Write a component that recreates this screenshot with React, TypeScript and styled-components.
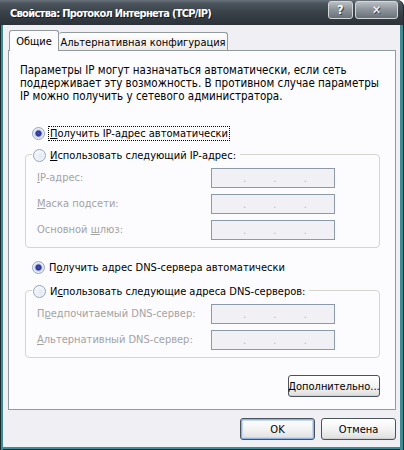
import styled, { createGlobalStyle } from "styled-components"

const Global = createGlobalStyle`
html, body { margin: 0; padding: 0; background: #fff; }
body {
  font-family: "DejaVu Sans Condensed", "DejaVu Sans", "Liberation Sans", sans-serif;
  font-size: 11px;
  color: #000;
}
`

const Window = styled.div`
width: 404px;
height: 450px;
display: flex;
flex-direction: column;
overflow: hidden;
`

const TitleBar = styled.div`
height: 25px;
flex: none;
display: flex;
justify-content: space-between;
align-items: flex-start;
padding: 0 6px 0 10px;
border-radius: 0 7px 0 0;
background: linear-gradient(to bottom, #6a727c 0%, #4b535c 14%, #3a4149 50%, #2c3238 100%);
box-shadow: inset -1px 0 #1b2a2e;
`

const Title = styled.div`
color: #fff;
font-weight: bold;
font-size: 11px;
letter-spacing: -0.7px;
line-height: 14px;
padding-top: 7px;
text-shadow: 1px 1px #161b20;
white-space: nowrap;
`

const Caption = styled.div`
display: flex;
gap: 2px;
padding-top: 1px;
`

const CapButton = styled.div<{ $w: number }>`
width: ${p => p.$w}px;
height: 18px;
box-sizing: border-box;
border: 1px solid #d3d7db;
border-radius: 3px;
background: linear-gradient(to bottom, #b9bec3 0%, #8e959c 45%, #6a7179 100%);
color: #fff;
font-weight: bold;
font-size: 12px;
display: flex;
align-items: center;
justify-content: center;
text-shadow: 1px 1px #3c4249;
`

const Body = styled.div`
flex: 1;
display: flex;
flex-direction: column;
padding: 5px 8px 0 8px;
background: #f0f0f4;
box-shadow: inset 1px 0 #1b2a2e, inset 3px 0 #3d8c94,
  inset -1px 0 #1b2a2e, inset -4px 0 #3d8c94,
  inset 0 -1px #1b2a2e, inset 0 -3px #3d8c94;
`

const TabStrip = styled.div`
display: flex;
align-items: flex-end;
height: 20px;
padding-left: 1px;
position: relative;
z-index: 1;
`

const Tab = styled.div<{ $active?: boolean; $w: number }>`
width: ${p => p.$w}px;
height: ${p => (p.$active ? 21 : 18)}px;
box-sizing: border-box;
border: 1px solid #919b9c;
border-bottom: none;
${p => (p.$active ? "" : "border-left: none;")}
border-radius: 3px 3px 0 0;
background: ${p => (p.$active ? "#fcfcfe" : "linear-gradient(to bottom, #ffffff, #ecebe8)")};
display: flex;
align-items: center;
justify-content: center;
padding-top: ${p => (p.$active ? 1 : 2)}px;
white-space: nowrap;
${p => (p.$active ? "margin-bottom: -1px;" : "")}
`

const Panel = styled.div`
height: 360px;
box-sizing: border-box;
background: #fcfcfe;
border: 1px solid #919b9c;
padding: 13px 15px 0 11px;
display: flex;
flex-direction: column;
`

const Para = styled.p`
margin: 0;
font-size: 11.5px;
line-height: 13px;
white-space: nowrap;
`

const RadioRow = styled.div<{ $mt: number }>`
display: flex;
align-items: center;
height: 16px;
margin: ${p => p.$mt}px 0 0 12px;
gap: 4px;
`

const Radio = styled.span<{ $on?: boolean }>`
width: 13px;
height: 13px;
flex: none;
box-sizing: border-box;
border-radius: 50%;
border: 1px solid #8ea6bf;
background: ${p =>
  p.$on
    ? "radial-gradient(circle at 50% 50%, #4a4fb8 0, #2c2f94 2.5px, #b7c3e6 3.5px, #e6ebf5 4.5px, #f6f7fa 6px)"
    : "radial-gradient(circle at 60% 60%, #e3e8f0 0, #f6f7fa 6px)"};
`

const Focus = styled.span`
outline: 1px dotted #000;
outline-offset: 0;
padding: 0 1px;
line-height: 13px;
`

const Group = styled.div<{ $mt: number }>`
margin: ${p => p.$mt}px 0 0 5px;
width: 355px;
box-sizing: border-box;
border: 1px solid #d5d5cc;
border-radius: 4px;
padding: 0 0 7px 11px;
`

const Legend = styled.div`
display: flex;
width: fit-content;
align-items: center;
gap: 4px;
height: 16px;
margin: -8px 0 0 -5px;
padding: 0 4px 0 1px;
background: #fcfcfe;
`

const Fields = styled.div`
display: grid;
grid-template-columns: 174px 124px;
grid-auto-rows: 20px;
row-gap: 6px;
margin-top: 5px;
`

const Label = styled.span`
color: #a3a3a3;
display: block;
line-height: 20px;
white-space: nowrap;
`

const IpBox = styled.div`
box-sizing: border-box;
border: 1px solid #8b9aa7;
background: #f1f1f5;
display: flex;
padding-left: 31px;
align-items: flex-end;
padding-bottom: 3px;
`

const Dot = styled.span`
width: 31px;
color: #b5b5b5;
font-size: 11px;
line-height: 10px;
`

const Button = styled.div<{ $w: number; $default?: boolean }>`
width: ${p => p.$w}px;
height: 22px;
box-sizing: border-box;
border: 1px solid #4a525c;
border-radius: 3px;
background: linear-gradient(to bottom, #ffffff 0%, #f3f3f3 50%, #e3e3e3 90%, #d4d4d4 100%);
box-shadow: ${p => (p.$default ? "inset 0 0 0 1px #8db2e3, inset 0 0 0 2px #c5d8f1" : "inset 0 -1px #d0d0d0")};
display: flex;
align-items: center;
justify-content: center;
white-space: nowrap;
`

const MoreButton = styled(Button)`
align-self: flex-end;
margin-top: 17px;
`

const Footer = styled.div`
display: flex;
justify-content: flex-end;
gap: 6px;
padding: 8px 0 0 0;
`

const ipFields = [
  { label: <><u>I</u>P-адрес:</> },
  { label: <><u>М</u>аска подсети:</> },
  { label: <>Основной <u>ш</u>люз:</> },
]

const dnsFields = [
  { label: <>П<u>р</u>едпочитаемый DNS-сервер:</> },
  { label: <><u>А</u>льтернативный DNS-сервер:</> },
]

const FieldRows = ({ rows }: { rows: { label: JSX.Element }[] }) => (
  <Fields>
    {rows.map((r, i) => [
      <Label key={`l-${i}`}>{r.label}</Label>,
      <IpBox key={`b-${i}`}><Dot>.</Dot><Dot>.</Dot><Dot>.</Dot></IpBox>,
    ])}
  </Fields>
)

export default function App() {
  return (
    <>
      <Global />
      <Window>
        <TitleBar>
          <Title>Свойства: Протокол Интернета (TCP/IP)</Title>
          <Caption>
            <CapButton $w={25}>?</CapButton>
            <CapButton $w={43}>✕</CapButton>
          </Caption>
        </TitleBar>
        <Body>
          <TabStrip>
            <Tab $active $w={50}>Общие</Tab>
            <Tab $w={169}>Альтернативная конфигурация</Tab>
          </TabStrip>
          <Panel>
            <Para>
              Параметры IP могут назначаться автоматически, если сеть<br />
              поддерживает эту возможность. В противном случае параметры<br />
              IP можно получить у сетевого администратора.
            </Para>
            <RadioRow $mt={22}>
              <Radio $on />
              <Focus><u>П</u>олучить IP-адрес автоматически</Focus>
            </RadioRow>
            <Group $mt={13}>
              <Legend>
                <Radio />
                <span><u>И</u>спользовать следующий IP-адрес:</span>
              </Legend>
              <FieldRows rows={ipFields} />
            </Group>
            <RadioRow $mt={11}>
              <Radio $on />
              <span>П<u>о</u>лучить адрес DNS-сервера автоматически</span>
            </RadioRow>
            <Group $mt={15}>
              <Legend>
                <Radio />
                <span>И<u>с</u>пользовать следующие адреса DNS-серверов:</span>
              </Legend>
              <FieldRows rows={dnsFields} />
            </Group>
            <MoreButton $w={92}><u>Д</u>ополнительно...</MoreButton>
          </Panel>
          <Footer>
            <Button $w={75} $default>OK</Button>
            <Button $w={75}>Отмена</Button>
          </Footer>
        </Body>
      </Window>
    </>
  )
}
